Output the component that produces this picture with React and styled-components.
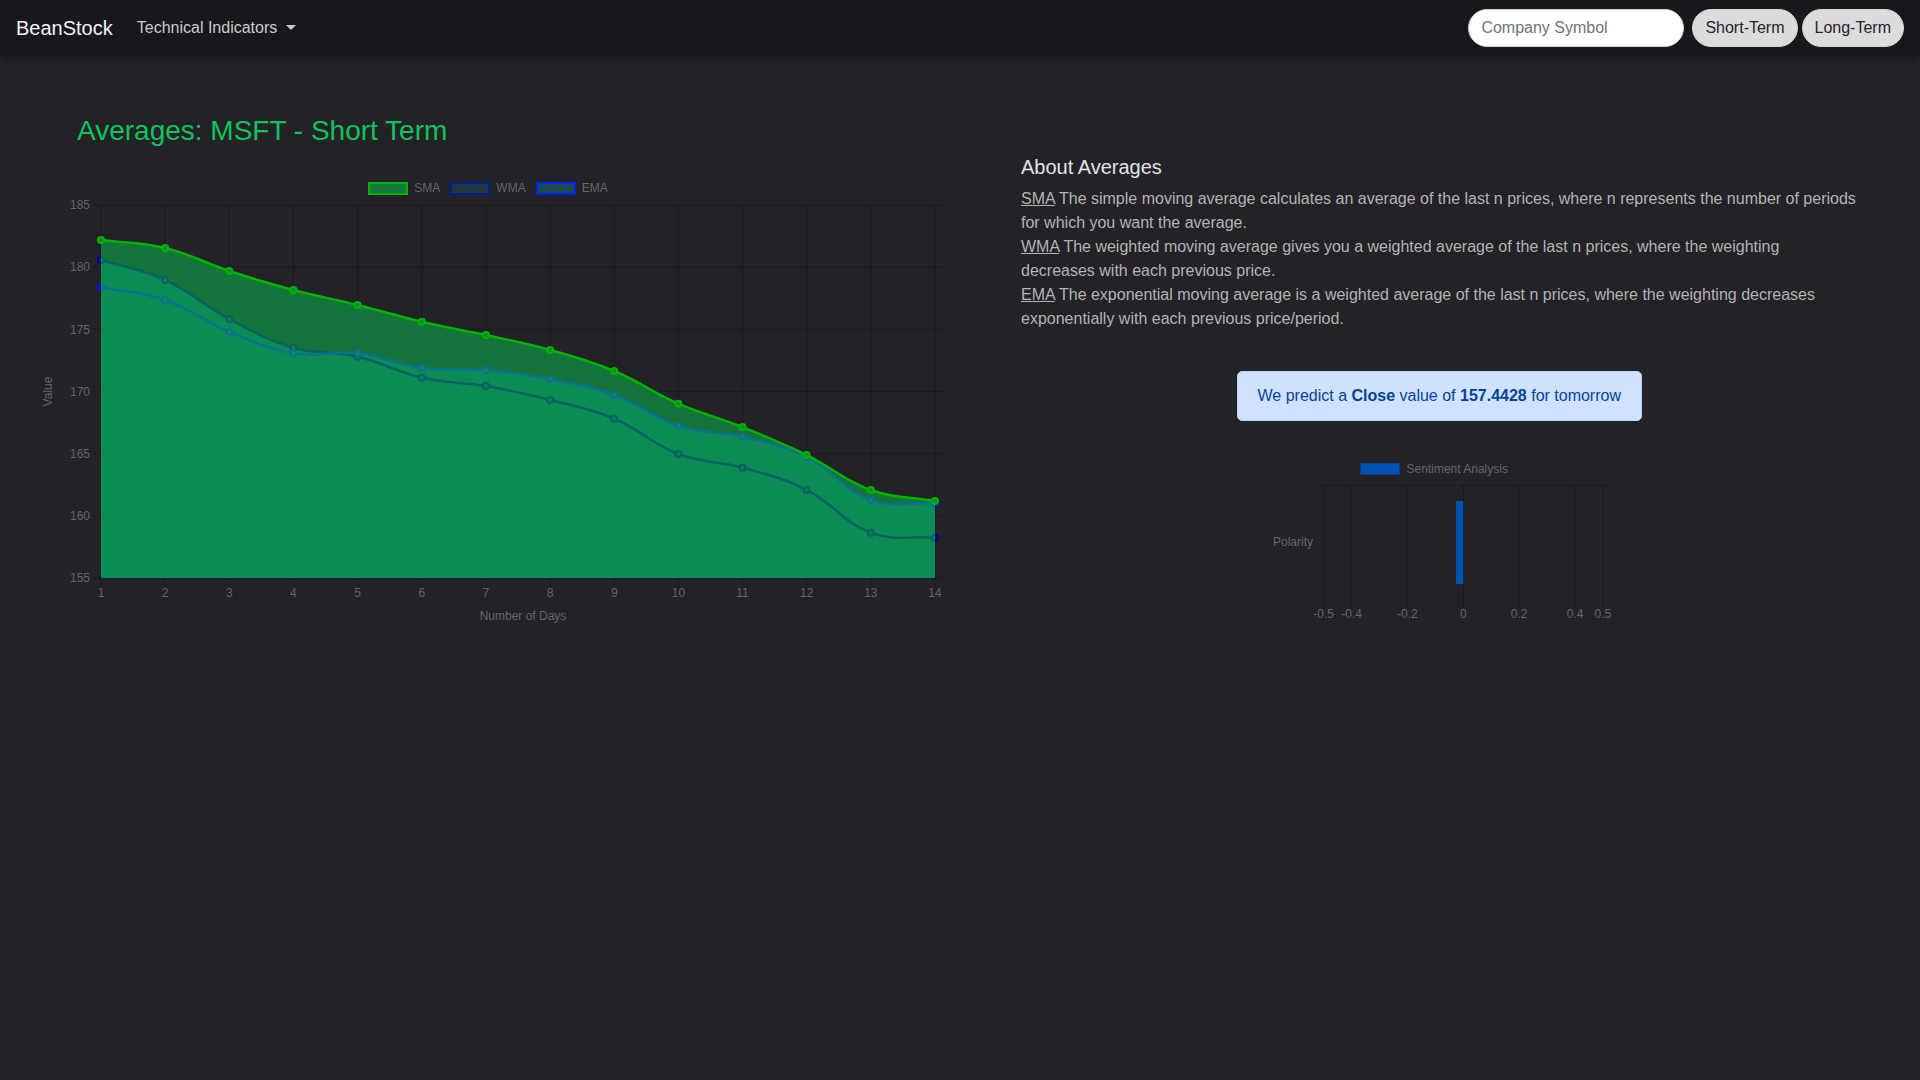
import React from "react";
import styled, { createGlobalStyle } from "styled-components";

const GlobalStyle = createGlobalStyle`
  body {
    margin: 0;
    background: #232227;
    font-family: "Liberation Sans", Arial, Helvetica, sans-serif;
  }
  * { box-sizing: border-box; }
`;

// chart geometry, in page pixels (the svg viewBox uses the same numbers)
const PLOT = { left: 101, right: 945, top: 205, bottom: 578, lastX: 935 };
const Y_MAX = 185;
const Y_MIN = 155;
const DAYS = [1, 2, 3, 4, 5, 6, 7, 8, 9, 10, 11, 12, 13, 14];

const series = {
  sma: [182.18, 181.54, 179.69, 178.16, 176.96, 175.61, 174.54, 173.34, 171.65, 169.02, 167.14, 164.89, 162.08, 161.19],
  wma: [180.58, 178.97, 175.83, 173.52, 172.8, 171.11, 170.44, 169.32, 167.81, 164.97, 163.87, 162.08, 158.64, 158.24],
  ema: [178.4, 177.36, 174.81, 173.07, 173.07, 171.91, 171.73, 171.0, 169.74, 167.25, 166.36, 164.76, 161.27, 161.01],
};

const xAt = (i) => PLOT.left + (i * (PLOT.lastX - PLOT.left)) / (DAYS.length - 1);
const yAt = (v) => PLOT.top + ((Y_MAX - v) * (PLOT.bottom - PLOT.top)) / (Y_MAX - Y_MIN);

const toPoints = (vals) => vals.map((v, i) => ({ x: xAt(i), y: yAt(v) }));

// same spline as chart.js (tension 0.4)
const splinePath = (pts, t = 0.4) => {
  const cps = pts.map((p, i) => {
    const prev = pts[i - 1] || p;
    const next = pts[i + 1] || p;
    const d01 = Math.hypot(p.x - prev.x, p.y - prev.y);
    const d12 = Math.hypot(next.x - p.x, next.y - p.y);
    const sum = d01 + d12 || 1;
    const fa = (t * d01) / sum;
    const fb = (t * d12) / sum;
    return {
      px: p.x - fa * (next.x - prev.x),
      py: p.y - fa * (next.y - prev.y),
      nx: p.x + fb * (next.x - prev.x),
      ny: p.y + fb * (next.y - prev.y),
    };
  });
  let d = `M${pts[0].x},${pts[0].y}`;
  for (let i = 1; i < pts.length; i++) {
    d += ` C${cps[i - 1].nx},${cps[i - 1].ny} ${cps[i].px},${cps[i].py} ${pts[i].x},${pts[i].y}`;
  }
  return d;
};

const areaPath = (pts) =>
  `${splinePath(pts)} L${pts[pts.length - 1].x},${PLOT.bottom} L${pts[0].x},${PLOT.bottom} Z`;

const Navbar = styled.nav`
  position: relative;
  z-index: 2;
  height: 56px;
  display: flex;
  align-items: center;
  padding: 0 16px;
  background: #18171c;
  box-shadow: 0 3px 9px rgba(0, 0, 0, 0.35);
`;

const Brand = styled.a`
  font-size: 20px;
  line-height: 30px;
  color: #f4f4f4;
  margin-right: 24px;
  text-decoration: none;
`;

const NavToggle = styled.a`
  font-size: 16px;
  line-height: 24px;
  color: rgba(255, 255, 255, 0.78);
  display: flex;
  align-items: center;
  cursor: pointer;

  &::after {
    content: "";
    margin-left: 9px;
    margin-top: -1px;
    border-top: 5px solid rgba(255, 255, 255, 0.78);
    border-left: 5px solid transparent;
    border-right: 5px solid transparent;
  }
`;

const SearchForm = styled.form`
  margin-left: auto;
  display: flex;
  align-items: center;
`;

const SymbolInput = styled.input`
  width: 216px;
  height: 38px;
  padding: 0 12px;
  margin-right: 8px;
  border: 1px solid #ced4da;
  border-radius: 19px;
  background: #fff;
  font: 16px "Liberation Sans", Arial, sans-serif;
  color: #212529;
  outline: none;

  &::placeholder {
    color: #6c757d;
  }
`;

const TermButton = styled.button`
  height: 38px;
  padding: 0 12px;
  margin-left: ${(p) => (p.$first ? "0" : "4px")};
  border: 1px solid #d4d4d4;
  border-radius: 19px;
  background: #dcdcdc;
  color: #212529;
  font: 16px "Liberation Sans", Arial, sans-serif;
  cursor: pointer;
`;

const Main = styled.main`
  display: flex;
`;

const LeftCol = styled.section`
  width: 960px;
  flex-shrink: 0;
  padding: 58px 0 0 31px;
`;

const Title = styled.h2`
  margin: 0 0 0 46px;
  font-size: 28px;
  line-height: 1.2;
  font-weight: 400;
  color: #10c35a;
`;

const Legend = styled.div`
  width: ${(p) => p.$width || "100%"};
  height: 13px;
  margin-top: ${(p) => p.$top || 0}px;
  padding-right: ${(p) => p.$shift || 0}px;
  display: flex;
  justify-content: center;
  align-items: center;
  gap: 10px;
`;

const LegendItem = styled.div`
  display: flex;
  align-items: center;
  gap: ${(p) => p.$gap || 6}px;
  font-size: 12px;
  color: #666;
`;

const Swatch = styled.span`
  width: 40px;
  height: ${(p) => p.$h || 13}px;
  background: ${(p) => p.$fill};
  border: ${(p) => p.$bw || 2}px solid ${(p) => p.$stroke};
`;

const ChartSvg = styled.svg`
  display: block;
  margin: ${(p) => p.$margin || "3px 0 0"};
  font-family: "Liberation Sans", Arial, sans-serif;
  font-size: 12px;
`;

const RightCol = styled.section`
  flex: 1;
  padding: 99px 62.5px 0 61px;
`;

const AboutTitle = styled.h5`
  margin: 0 0 8px;
  font-size: 20px;
  line-height: 1.2;
  font-weight: 400;
  color: #e4e4e4;
`;

const Definition = styled.div`
  font-size: 16px;
  line-height: 1.5;
  color: #b4b4b4;
`;

const Abbr = styled.abbr`
  text-decoration: underline;
  cursor: help;
`;

const Alert = styled.div`
  width: fit-content;
  margin: 40px auto 0;
  padding: 12px 20px;
  background: #cfe2ff;
  border: 1px solid #b6d4fe;
  border-radius: 5px;
  color: #084298;
  font-size: 16px;
  line-height: 1.5;

  b {
    font-weight: 700;
  }
`;

const SentimentBox = styled.div`
  margin-top: 41px;
`;

const GRID = "rgba(0, 0, 0, 0.2)";
const TICK = "#666";

const AveragesChart = () => {
  const sma = toPoints(series.sma);
  const wma = toPoints(series.wma);
  const ema = toPoints(series.ema);
  const yTicks = [185, 180, 175, 170, 165, 160, 155];

  const dots = (pts, stroke, fill) =>
    pts.map((p, i) => <circle key={i} cx={p.x} cy={p.y} r="3" fill={fill} stroke={stroke} strokeWidth="2" />);

  return (
    <ChartSvg width="914" height="432" viewBox="31 198 914 432">
      <defs>
        <clipPath id="plotClip">
          <rect x={PLOT.left} y={PLOT.top - 10} width={PLOT.lastX - PLOT.left} height={PLOT.bottom - PLOT.top + 10} />
        </clipPath>
      </defs>

      {yTicks.map((v) => (
        <g key={v}>
          <line x1="93" x2={PLOT.right} y1={yAt(v)} y2={yAt(v)} stroke={GRID} />
          <text x="90" y={yAt(v)} dy="0.35em" textAnchor="end" fill={TICK}>{v}</text>
        </g>
      ))}
      {DAYS.map((d, i) => (
        <g key={d}>
          <line x1={xAt(i)} x2={xAt(i)} y1={PLOT.top} y2={PLOT.bottom + 8} stroke={GRID} />
          <text x={xAt(i)} y="593" dy="0.35em" textAnchor="middle" fill={TICK}>{d}</text>
        </g>
      ))}
      <text x="523" y="616" dy="0.35em" textAnchor="middle" fill={TICK}>Number of Days</text>
      <text x="47.5" y="391.5" dy="0.35em" textAnchor="middle" fill={TICK} transform="rotate(-90 47.5 391.5)">Value</text>

      {/* end points keep their real colour where they stick out of the fill */}
      {[0, 13].map((i) => (
        <g key={i}>
          <circle cx={wma[i].x} cy={wma[i].y} r="3" fill="none" stroke="#0000a8" strokeWidth="2" />
          <circle cx={ema[i].x} cy={ema[i].y} r="3" fill="none" stroke="#0010ff" strokeWidth="2" />
        </g>
      ))}

      <path d={areaPath(sma)} fill="#14743b" />
      <path d={areaPath(wma)} fill="#0c8c55" />
      <path d={areaPath(ema)} fill="#0c8c55" />

      <g clipPath="url(#plotClip)">
        <path d={splinePath(wma)} fill="none" stroke="#0a6262" strokeWidth="2.5" />
        {dots(wma, "#0a6262", "#0c8253")}
        <path d={splinePath(ema)} fill="none" stroke="#0b7190" strokeWidth="2.5" />
        {dots(ema, "#0b7190", "#0c8a5a")}
      </g>
      <path d={splinePath(sma)} fill="none" stroke="#00b400" strokeWidth="2.5" />
      {dots(sma, "#00b400", "#17853a")}
    </ChartSvg>
  );
};

const SentimentChart = () => {
  const zero = 1464.3;
  const unit = 279.2;
  const sx = (v) => zero + v * unit;
  const ticks = [-0.5, -0.4, -0.2, 0, 0.2, 0.4, 0.5];

  return (
    <ChartSvg width="360" height="150" viewBox="1260 478 360 150" $margin="3px auto 0">
      <line x1="1315" x2="1615" y1="485" y2="485" stroke={GRID} />
      <line x1="1315" x2="1615" y1="600" y2="600" stroke={GRID} />
      {ticks.map((t) => (
        <g key={t}>
          <line x1={sx(t)} x2={sx(t)} y1="485" y2="608" stroke={t === 0 ? "rgba(0,0,0,0.3)" : GRID} />
          <text x={sx(t)} y="614" dy="0.35em" textAnchor="middle" fill={TICK}>{t}</text>
        </g>
      ))}
      <text x="1314" y="542" dy="0.35em" textAnchor="end" fill={TICK}>Polarity</text>
      <rect x={sx(-0.026)} y="501" width={0.026 * unit} height="83" fill="#0052b4" />
    </ChartSvg>
  );
};

const App = () => {
  return (
    <>
      <GlobalStyle />
      <Navbar>
        <Brand href="#">BeanStock</Brand>
        <NavToggle>Technical Indicators</NavToggle>
        <SearchForm onSubmit={(e) => e.preventDefault()}>
          <SymbolInput type="text" placeholder="Company Symbol" />
          <TermButton type="submit" $first>Short-Term</TermButton>
          <TermButton type="submit">Long-Term</TermButton>
        </SearchForm>
      </Navbar>

      <Main>
        <LeftCol>
          <Title>Averages: MSFT - Short Term</Title>
          <Legend $width="914px" $top={34}>
            <LegendItem>
              <Swatch $fill="#16783d" $stroke="#00b400" />
              SMA
            </LegendItem>
            <LegendItem>
              <Swatch $fill="#1f3840" $stroke="#001c94" />
              WMA
            </LegendItem>
            <LegendItem>
              <Swatch $fill="#1e4a52" $stroke="#0022ff" />
              EMA
            </LegendItem>
          </Legend>
          <AveragesChart />
        </LeftCol>

        <RightCol>
          <AboutTitle>About Averages</AboutTitle>
          <Definition>
            <Abbr title="Simple Moving Average">SMA</Abbr> The simple moving average calculates an average of the last n prices, where n represents the number of periods for which you want the average.
          </Definition>
          <Definition>
            <Abbr title="Weighted Moving Average">WMA</Abbr> The weighted moving average gives you a weighted average of the last n prices, where the weighting decreases with each previous price.
          </Definition>
          <Definition>
            <Abbr title="Exponential Moving Average">EMA</Abbr> The exponential moving average is a weighted average of the last n prices, where the weighting decreases exponentially with each previous price/period.
          </Definition>

          <Alert>
            We predict a <b>Close</b> value of <b>157.4428</b> for tomorrow
          </Alert>

          <SentimentBox>
            <Legend $shift={11}>
              <LegendItem $gap={7}>
                <Swatch $fill="#0052b4" $stroke="#0a3f86" $bw={1} $h={12} />
                Sentiment Analysis
              </LegendItem>
            </Legend>
            <SentimentChart />
          </SentimentBox>
        </RightCol>
      </Main>
    </>
  );
};

export default App;
